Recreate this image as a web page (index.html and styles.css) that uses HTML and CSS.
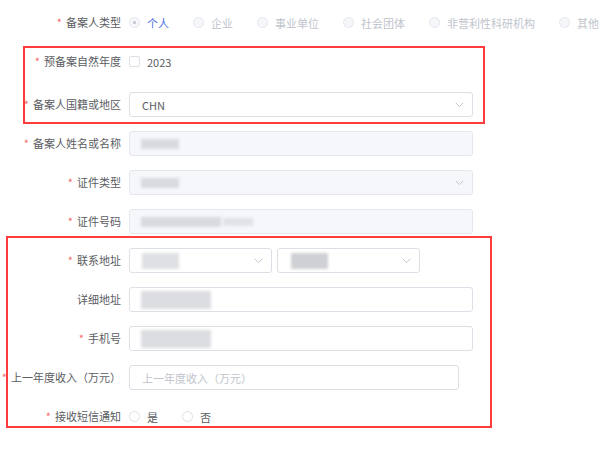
FILE: index.html
```html
<!DOCTYPE html>
<html lang="zh">
<head>
<meta charset="utf-8">
<link rel="stylesheet" href="styles.css">
</head>
<body>
<div class="form">
  <div class="row">
    <div class="label"><span class="req">*</span>备案人类型</div>
    <div class="radios">
      <span class="radio-item"><span class="radio radio-dis checked"></span><span class="rtext active">个人</span></span>
      <span class="radio-item"><span class="radio radio-dis"></span><span class="rtext dis">企业</span></span>
      <span class="radio-item"><span class="radio radio-dis"></span><span class="rtext dis">事业单位</span></span>
      <span class="radio-item"><span class="radio radio-dis"></span><span class="rtext dis">社会团体</span></span>
      <span class="radio-item"><span class="radio radio-dis"></span><span class="rtext dis">非营利性科研机构</span></span>
      <span class="radio-item"><span class="radio radio-dis"></span><span class="rtext dis">其他</span></span>
    </div>
  </div>
  <div class="row row-gap">
    <div class="label"><span class="req">*</span>预备案自然年度</div>
    <span class="checkbox"></span><span class="ctext">2023</span>
  </div>
  <div class="row">
    <div class="label"><span class="req">*</span>备案人国籍或地区</div>
    <div class="input w-full"><span class="val">CHN</span><svg class="chev" width="9" height="6" viewBox="0 0 9 6"><path d="M0.7 0.8 L4.5 4.6 L8.3 0.8" fill="none" stroke="#c0c4cc" stroke-width="1"/></svg></div>
  </div>
  <div class="row">
    <div class="label"><span class="req">*</span>备案人姓名或名称</div>
    <div class="input w-full disabled"><span class="blur b1"></span></div>
  </div>
  <div class="row">
    <div class="label"><span class="req">*</span>证件类型</div>
    <div class="input w-full disabled"><span class="blur b1"></span><svg class="chev" width="9" height="6" viewBox="0 0 9 6"><path d="M0.7 0.8 L4.5 4.6 L8.3 0.8" fill="none" stroke="#c0c4cc" stroke-width="1"/></svg></div>
  </div>
  <div class="row">
    <div class="label"><span class="req">*</span>证件号码</div>
    <div class="input w-full disabled"><span class="blur b3"></span><span class="blur b3b"></span></div>
  </div>
  <div class="row">
    <div class="label"><span class="req">*</span>联系地址</div>
    <div class="selects">
      <div class="input w-half"><span class="blur b2"></span><svg class="chev" width="9" height="6" viewBox="0 0 9 6"><path d="M0.7 0.8 L4.5 4.6 L8.3 0.8" fill="none" stroke="#c0c4cc" stroke-width="1"/></svg></div>
      <div class="input w-half"><span class="blur b2 dark"></span><svg class="chev" width="9" height="6" viewBox="0 0 9 6"><path d="M0.7 0.8 L4.5 4.6 L8.3 0.8" fill="none" stroke="#c0c4cc" stroke-width="1"/></svg></div>
    </div>
  </div>
  <div class="row">
    <div class="label">详细地址</div>
    <div class="input w-full"><span class="blur b4"></span></div>
  </div>
  <div class="row">
    <div class="label"><span class="req">*</span>手机号</div>
    <div class="input w-full"><span class="blur b4"></span></div>
  </div>
  <div class="row">
    <div class="label"><span class="req">*</span>上一年度收入（万元）</div>
    <div class="input w-income"><span class="ph">上一年度收入（万元）</span></div>
  </div>
  <div class="row">
    <div class="label"><span class="req">*</span>接收短信通知</div>
    <div class="radios">
      <span class="radio-item"><span class="radio"></span><span class="rtext">是</span></span>
      <span class="radio-item"><span class="radio"></span><span class="rtext">否</span></span>
    </div>
  </div>
</div>
<div class="mark mark1"></div>
<div class="mark mark2"></div>
</body>
</html>
```

FILE: styles.css
```css
html, body {
  margin: 0;
  padding: 0;
  background: #ffffff;
}
body {
  font-family: "Noto Sans CJK SC", "Noto Sans", "Liberation Sans", sans-serif;
  font-size: 11px;
  color: #5a5c61;
  position: relative;
  width: 602px;
  height: 464px;
  overflow: hidden;
}
.form {
  padding-top: 10px;
}
.row {
  display: flex;
  align-items: center;
  height: 25px;
  margin-bottom: 14px;
}
.row-gap {
  margin-bottom: 18px;
}
.label {
  flex: none;
  width: 121px;
  padding-right: 8px;
  display: flex;
  justify-content: flex-end;
  align-items: center;
  white-space: nowrap;
  color: #5a5c61;
  line-height: 25px;
}
.req {
  color: #f56c6c;
  margin-right: 4px;
}
.radios {
  display: flex;
  align-items: center;
}
.radio-item {
  display: flex;
  align-items: center;
  margin-right: 24px;
  white-space: nowrap;
}
.radio {
  width: 11px;
  height: 11px;
  box-sizing: border-box;
  border: 1px solid #dcdfe6;
  border-radius: 50%;
  background: #fff;
  margin-right: 7px;
  position: relative;
  flex: none;
}
.radio-dis {
  background: #f5f7fa;
  border-color: #e4e7ed;
}
.radio.checked::after {
  content: "";
  position: absolute;
  left: 3px;
  top: 3px;
  width: 3px;
  height: 3px;
  border-radius: 50%;
  background: #c0c4cc;
}
.rtext {
  color: #5a5c61;
}
.rtext.active {
  color: #4a72e0;
}
.rtext.dis {
  color: #c0c4cc;
}
.checkbox {
  width: 11px;
  height: 11px;
  box-sizing: border-box;
  border: 1px solid #dcdfe6;
  border-radius: 2px;
  background: #fff;
  margin-right: 7px;
  flex: none;
}
.ctext {
  color: #5a5c61;
}
.input {
  height: 25px;
  box-sizing: border-box;
  border: 1px solid #dcdfe6;
  border-radius: 3px;
  background: #fff;
  display: flex;
  align-items: center;
  padding: 0 8px 0 12px;
  position: relative;
  flex: none;
}
.input.disabled {
  background: #f5f7fa;
  border-color: #e4e7ed;
}
.w-full { width: 344px; }
.w-half { width: 143px; }
.w-income { width: 330px; }
.selects {
  display: flex;
  gap: 5px;
}
.val {
  color: #5a5c61;
}
.ph {
  color: #c0c4cc;
}
.chev {
  margin-left: auto;
  flex: none;
}
.blur {
  display: block;
  height: 10px;
  background: #d9dadd;
  filter: blur(1.5px);
  flex: none;
}
.b1 { width: 38px; margin-left: -1px; }
.b2 { width: 37px; height: 16px; background: #dfe0e3; }
.b2.dark { background: #cfd0d3; margin-left: 1px; }
.b3 { width: 80px; margin-left: -1px; }
.b3b { width: 30px; height: 8px; background: #e1e2e5; margin-left: 2px; }
.b4 { width: 70px; height: 18px; background: #dcdde0; margin-left: -1px; }
.mark {
  position: absolute;
  border: 2px solid #ff3b3b;
  box-sizing: border-box;
  pointer-events: none;
}
.mark1 {
  left: 23px;
  top: 46px;
  width: 462px;
  height: 78px;
}
.mark2 {
  left: 6px;
  top: 236px;
  width: 486px;
  height: 192px;
}
```
